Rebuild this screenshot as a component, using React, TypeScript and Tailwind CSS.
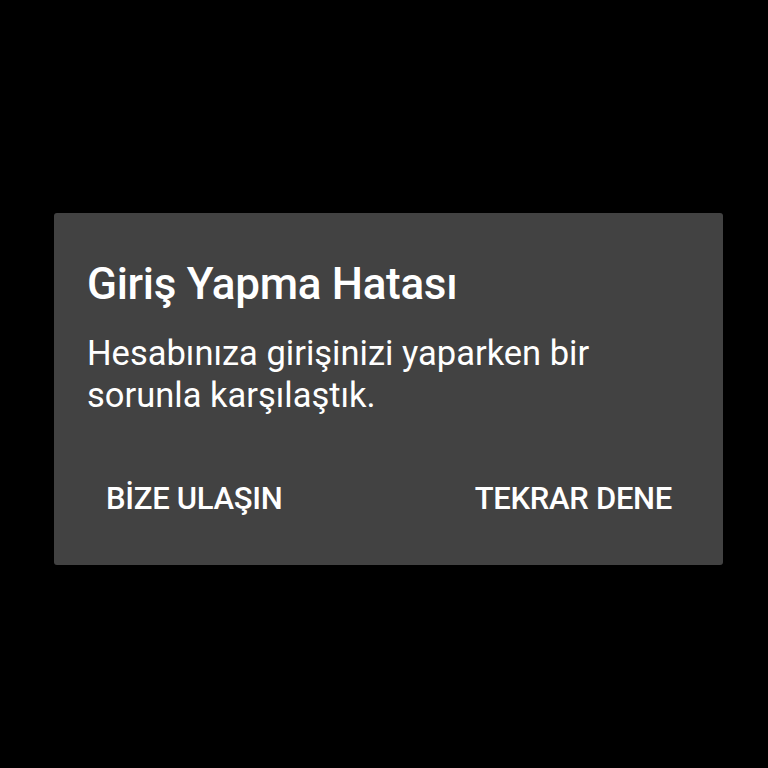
export default function App() {
  return (
    <div
      className="w-[768px] h-[768px] bg-black pt-[213px] pl-[54px]"
      style={{ fontFamily: 'Roboto, "Noto Sans", sans-serif' }}
    >
      <div className="w-[669px] h-[352px] bg-[#424242] rounded-[3px] flex flex-col pt-[45px]">
        <h1 className="pl-[33px] text-white text-[44px] font-medium leading-[52px] tracking-[-0.3px]">
          Giriş Yapma Hatası
        </h1>
        <p className="pl-[33px] text-white text-[34.5px] leading-[42px] mt-[22px]">
          Hesabınıza girişinizi yaparken bir
          <br />
          sorunla karşılaştık.
        </p>
        <div className="flex justify-between items-center mt-[63px] pl-[52px] pr-[51px]">
          <button className="text-white text-[31px] leading-[40px] font-medium tracking-[-0.3px]">BİZE ULAŞIN</button>
          <button className="text-white text-[31px] leading-[40px] font-medium tracking-[-0.3px]">TEKRAR DENE</button>
        </div>
      </div>
    </div>
  );
}
